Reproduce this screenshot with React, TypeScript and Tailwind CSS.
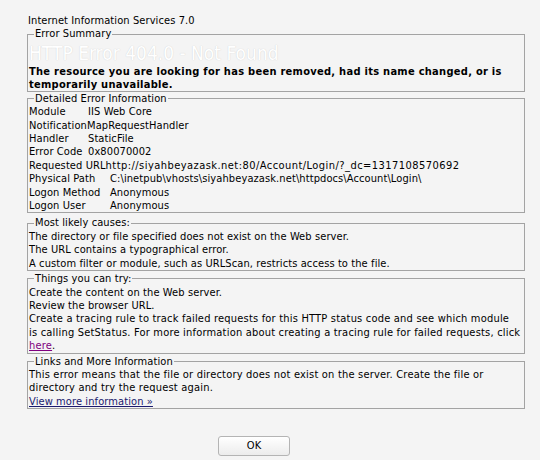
import type { ReactNode } from 'react';

const font = "font-['DejaVu_Sans_Condensed','DejaVu_Sans',sans-serif]";

function Box({ title, children, className = '' }: { title: string; children: ReactNode; className?: string }) {
  return (
    <fieldset className={`border border-[#a3a3a3] ${className}`}>
      <legend className="ml-[6px] px-[1px] leading-[13.4px]">{title}</legend>
      <div className="pl-[1px]">{children}</div>
    </fieldset>
  );
}

function Row({ label, value, w, vc }: { label: string; value: string; w?: string; vc?: string }) {
  return (
    <div className="flex whitespace-nowrap">
      <span className={w ?? 'shrink-0'}>{label}</span>
      <span className={vc}>{value}</span>
    </div>
  );
}

export default function App() {
  return (
    <div className={`min-h-[460px] w-[540px] bg-[#f4f4f4] pt-[14px] pl-[27px] text-[11px] leading-[13.4px] tracking-[0.1px] text-black ${font}`}>
      <div className="w-[498px]">
        <div className="pl-[1px]">Internet Information Services 7.0</div>

        <Box title="Error Summary">
          <div className="text-[19px] leading-[24px] tracking-normal text-white [text-shadow:0_0_1px_#c8c8c8]">
            HTTP Error 404.0 - Not Found
          </div>
          <div className="font-bold leading-[13px] tracking-[0.28px]">
            The resource you are looking for has been removed, had its name changed, or is
            <br />
            temporarily unavailable.
          </div>
        </Box>

        <Box title="Detailed Error Information">
          <Row label="Module" value="IIS Web Core" w="w-[59px] shrink-0" />
          <Row label="Notification" value="MapRequestHandler" w="w-[58px] shrink-0" />
          <Row label="Handler" value="StaticFile" w="w-[59px] shrink-0" />
          <Row label="Error Code" value="0x80070002" w="w-[59px] shrink-0" />
          <Row
            label="Requested URL"
            value="http://siyahbeyazask.net:80/Account/Login/?_dc=1317108570692"
            vc="tracking-[0.45px]"
          />
          <Row label="Physical Path" value="C:\inetpub\vhosts\siyahbeyazask.net\httpdocs\Account\Login\" w="w-[81px] shrink-0" />
          <Row label="Logon Method" value="Anonymous" w="w-[81px] shrink-0" />
          <Row label="Logon User" value="Anonymous" w="w-[81px] shrink-0" />
        </Box>

        <Box title="Most likely causes:" className="mt-[3px]">
          <div>The directory or file specified does not exist on the Web server.</div>
          <div>The URL contains a typographical error.</div>
          <div>A custom filter or module, such as URLScan, restricts access to the file.</div>
        </Box>

        <Box title="Things you can try:" className="mt-[1px]">
          <div>Create the content on the Web server.</div>
          <div>Review the browser URL.</div>
          <div className="tracking-[0.2px]">
            Create a tracing rule to track failed requests for this HTTP status code and see which module
            <br />
            is calling SetStatus. For more information about creating a tracing rule for failed requests, click
            <br />
            <a className="text-[#800080] underline">here</a>.
          </div>
        </Box>

        <Box title="Links and More Information" className="mt-[1px]">
          <div className="tracking-[0.2px]">
            This error means that the file or directory does not exist on the server. Create the file or
            <br />
            directory and try the request again.
          </div>
          <a className="text-[#1a1a6e] underline">View more information »</a>
        </Box>

        <div className="mt-[27px] pl-[191px]">
          <button className="h-[20px] w-[72px] rounded-[3px] border border-[#b4b4b4] bg-gradient-to-b from-white to-[#ececec] text-[11px] leading-[18px] text-black">
            OK
          </button>
        </div>
      </div>
    </div>
  );
}
